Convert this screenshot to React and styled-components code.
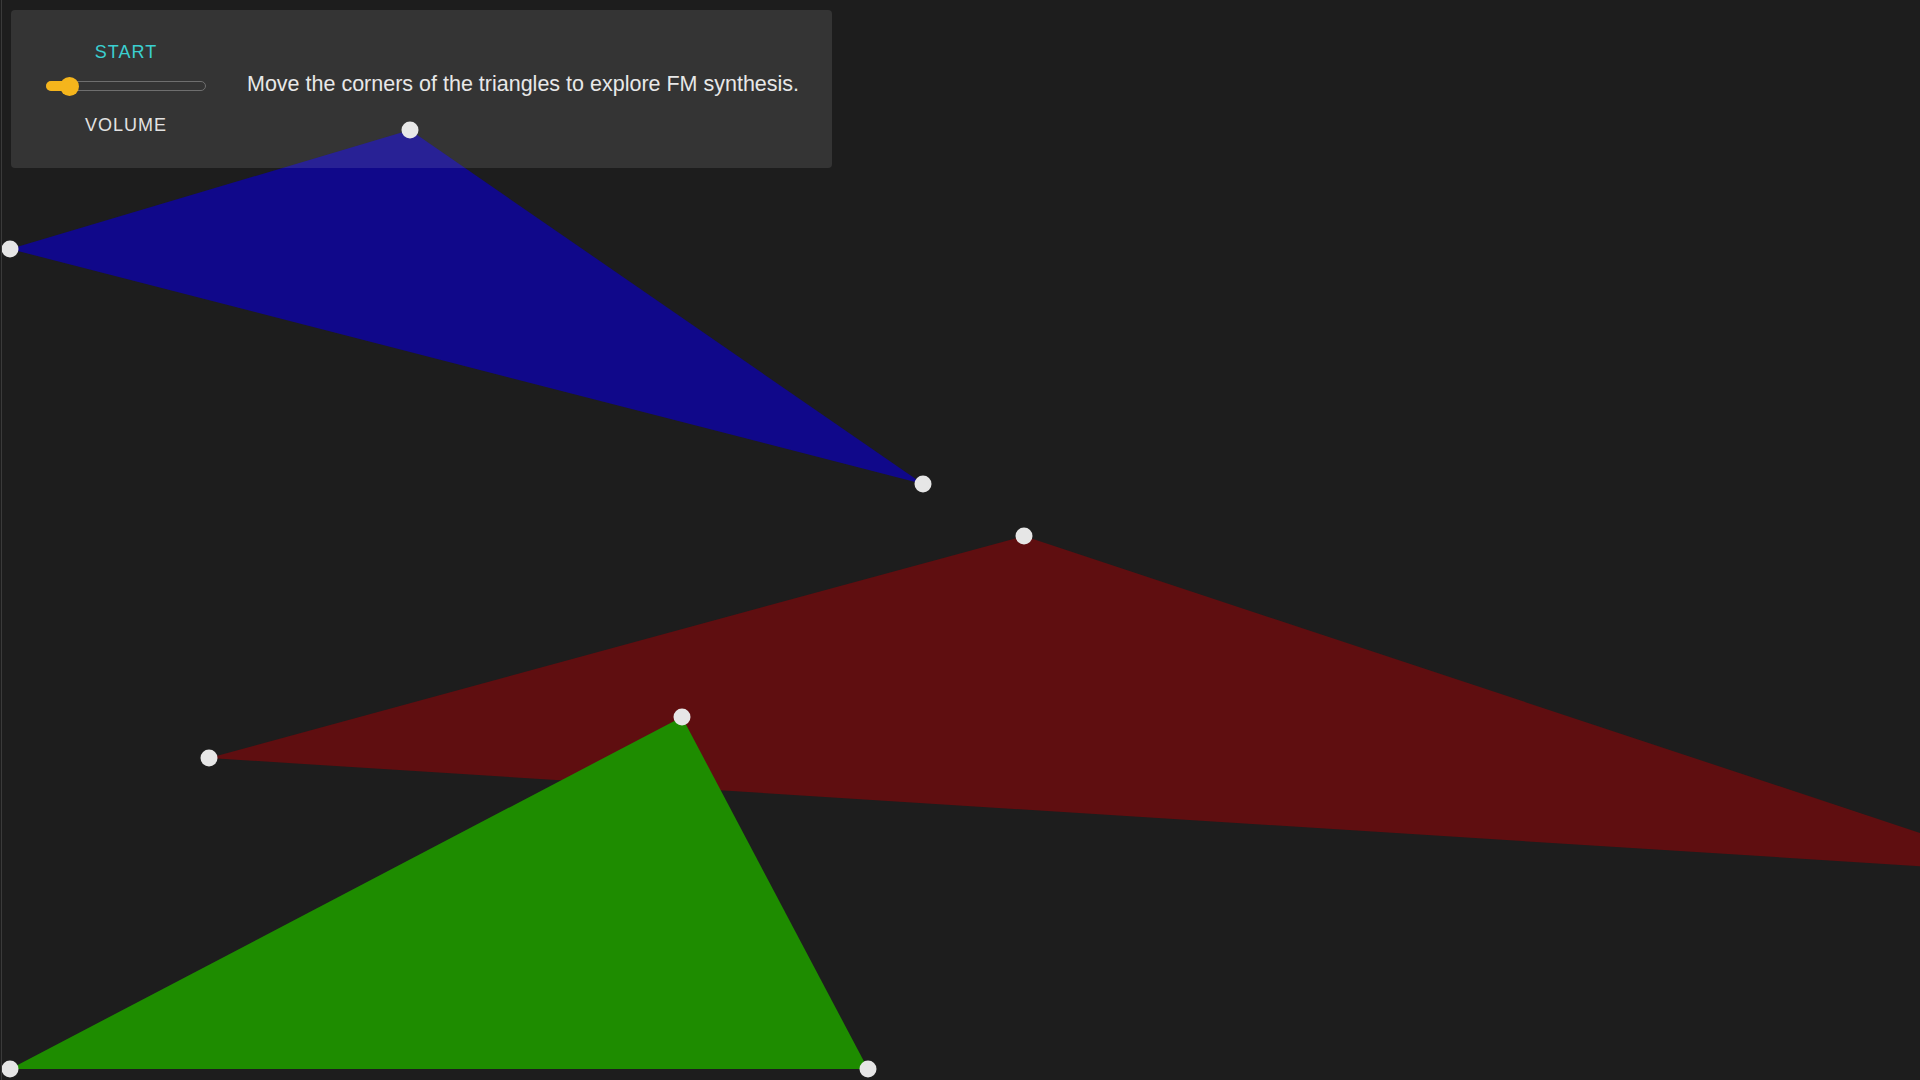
import React from 'react';
import styled, { createGlobalStyle } from 'styled-components';

const Global = createGlobalStyle`
  html, body {
    margin: 0;
    padding: 0;
    background: #1d1d1d;
    overflow: hidden;
  }
  body {
    font-family: "Liberation Sans", Arial, sans-serif;
  }
`;

const triangles = [
  {
    color: '#10088a',
    points: [[410, 130], [10, 249], [923, 484]],
  },
  {
    color: '#5f0e10',
    points: [[1024, 536], [209, 758], [2044, 874]],
  },
  {
    color: '#1e8c00',
    points: [[682, 717], [10, 1069], [868, 1069]],
  },
];

const Stage = styled.div`
  position: relative;
  width: 1920px;
  height: 1080px;
  overflow: hidden;
`;

const Canvas = styled.svg`
  display: block;
  width: 100%;
  height: 100%;
`;

const Edge = styled.div`
  position: absolute;
  left: 1px;
  top: 0;
  bottom: 0;
  width: 1px;
  background: #3a3a3a;
`;

const Panel = styled.div`
  position: absolute;
  left: 11px;
  top: 10px;
  width: 821px;
  height: 158px;
  box-sizing: border-box;
  border-radius: 4px;
  background: rgba(255, 255, 255, 0.1);
  display: flex;
  align-items: center;
  padding: 0 0 0 35px;
  gap: 41px;
`;

const Controls = styled.div`
  width: 160px;
  display: flex;
  flex-direction: column;
  align-items: center;
`;

const StartButton = styled.button`
  background: none;
  border: 0;
  padding: 0;
  margin: 0 0 18px;
  font-family: inherit;
  font-size: 18px;
  letter-spacing: 1px;
  color: #3bcfd0;
  cursor: pointer;
`;

const Track = styled.div`
  position: relative;
  width: 160px;
  height: 10px;
  box-sizing: border-box;
  border: 1px solid #6e6e6e;
  border-radius: 5px;
`;

const Fill = styled.div`
  position: absolute;
  left: -1px;
  top: -1px;
  height: 10px;
  border-radius: 5px;
  background: #f5b51c;
`;

const Thumb = styled.div`
  position: absolute;
  top: 50%;
  width: 19px;
  height: 19px;
  margin: -9.5px 0 0 -9.5px;
  border-radius: 50%;
  background: #f5b51c;
`;

const VolumeLabel = styled.div`
  margin-top: 24px;
  font-size: 18px;
  letter-spacing: 1px;
  color: #e2e2e2;
`;

const Hint = styled.p`
  margin: 0 0 9px;
  font-size: 21.5px;
  color: #e8e8e8;
`;

const Corner = styled.circle`
  fill: #e6e6e6;
`;

export default function App() {
  const volume = 0.14;
  return (
    <>
      <Global />
      <Stage>
        <Canvas viewBox="0 0 1920 1080">
          {triangles.map((t, i) => (
            <polygon key={i} points={t.points.map((p) => p.join(',')).join(' ')} fill={t.color} />
          ))}
          {triangles.map((t, i) =>
            t.points.map(([x, y], j) => <Corner key={`${i}-${j}`} cx={x} cy={y} r={8.5} />)
          )}
        </Canvas>
        <Edge />
        <Panel>
          <Controls>
            <StartButton>START</StartButton>
            <Track>
              <Fill style={{ width: `${volume * 160 + 1}px` }} />
              <Thumb style={{ left: `${volume * 160}px` }} />
            </Track>
            <VolumeLabel>VOLUME</VolumeLabel>
          </Controls>
          <Hint>Move the corners of the triangles to explore FM synthesis.</Hint>
        </Panel>
      </Stage>
    </>
  );
}
